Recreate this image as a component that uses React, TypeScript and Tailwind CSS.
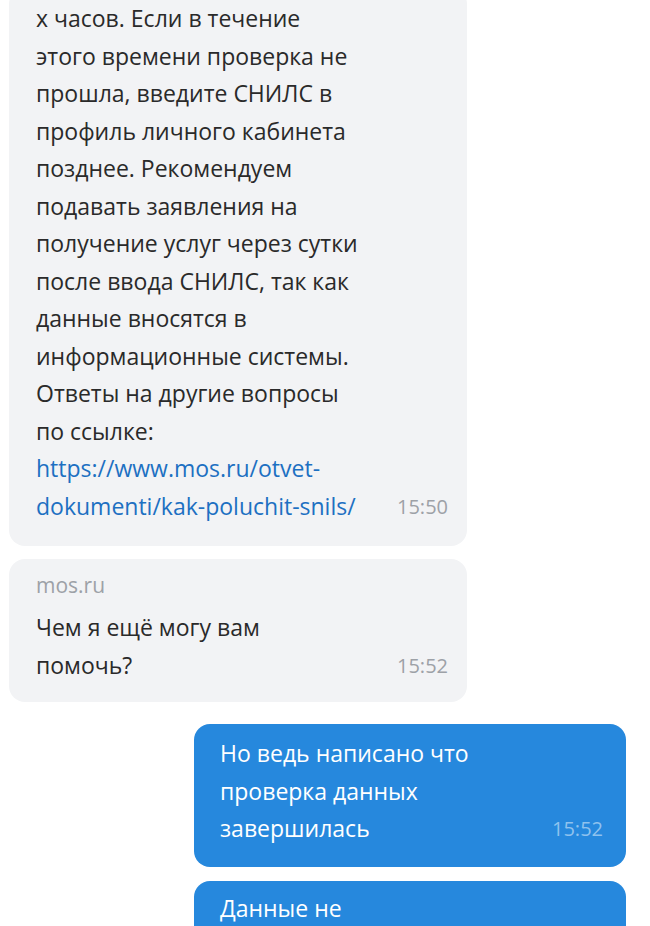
import React from "react";

type Msg = {
  out?: boolean;
  sender?: string;
  lines: React.ReactNode[];
  time?: string;
};

const font = { fontFamily: '"Open Sans", "Noto Sans", sans-serif' };

const Bubble: React.FC<Msg & { className?: string }> = ({ out, sender, lines, time, className }) => {
  const last = lines.length - 1;
  return (
    <div
      className={
        (out
          ? "ml-auto mr-[24px] w-[432px] bg-[#2688dd] text-white pl-[26px] pr-[23px] "
          : "ml-[9px] w-[458px] bg-[#f2f3f5] text-[#2a2a2a] pl-[27px] pr-[19px] ") +
        "rounded-[16px] " +
        (className ?? "")
      }
    >
      {sender && (
        <div className="text-[21px] leading-[47px] text-[#9da1a7]">{sender}</div>
      )}
      {lines.map((l, i) => (
        <div key={i} className="flex items-end justify-between text-[23px] leading-[37.5px] whitespace-nowrap">
          <span>{l}</span>
          {i === last && time && (
            <span className={"text-[20px] " + (out ? "text-[#8fc2ee]" : "text-[#9da1a7]")}>{time}</span>
          )}
        </div>
      ))}
    </div>
  );
};

export default function App() {
  return (
    <div className="w-[650px] h-[926px] overflow-hidden bg-white" style={font}>
      <Bubble
        className="-mt-[12px] pt-[12px] pb-[21px]"
        lines={[
          "х часов. Если в течение",
          "этого времени проверка не",
          "прошла, введите СНИЛС в",
          "профиль личного кабинета",
          "позднее. Рекомендуем",
          "подавать заявления на",
          "получение услуг через сутки",
          "после ввода СНИЛС, так как",
          "данные вносятся в",
          "информационные системы.",
          "Ответы на другие вопросы",
          "по ссылке:",
          <a className="text-[#1d70c2]">https://www.mos.ru/otvet-</a>,
          <a className="text-[#1d70c2]">dokumenti/kak-poluchit-snils/</a>,
        ]}
        time="15:50"
      />
      <Bubble
        className="mt-[13px] pt-[3px] pb-[18px]"
        sender="mos.ru"
        lines={["Чем я ещё могу вам", "помочь?"]}
        time="15:52"
      />
      <Bubble
        out
        className="mt-[22px] pt-[11px] pb-[19px]"
        lines={["Но ведь написано что", "проверка данных", "завершилась"]}
        time="15:52"
      />
      <Bubble out className="mt-[14px] pt-[9px] pb-[40px]" lines={["Данные не"]} />
    </div>
  );
}
